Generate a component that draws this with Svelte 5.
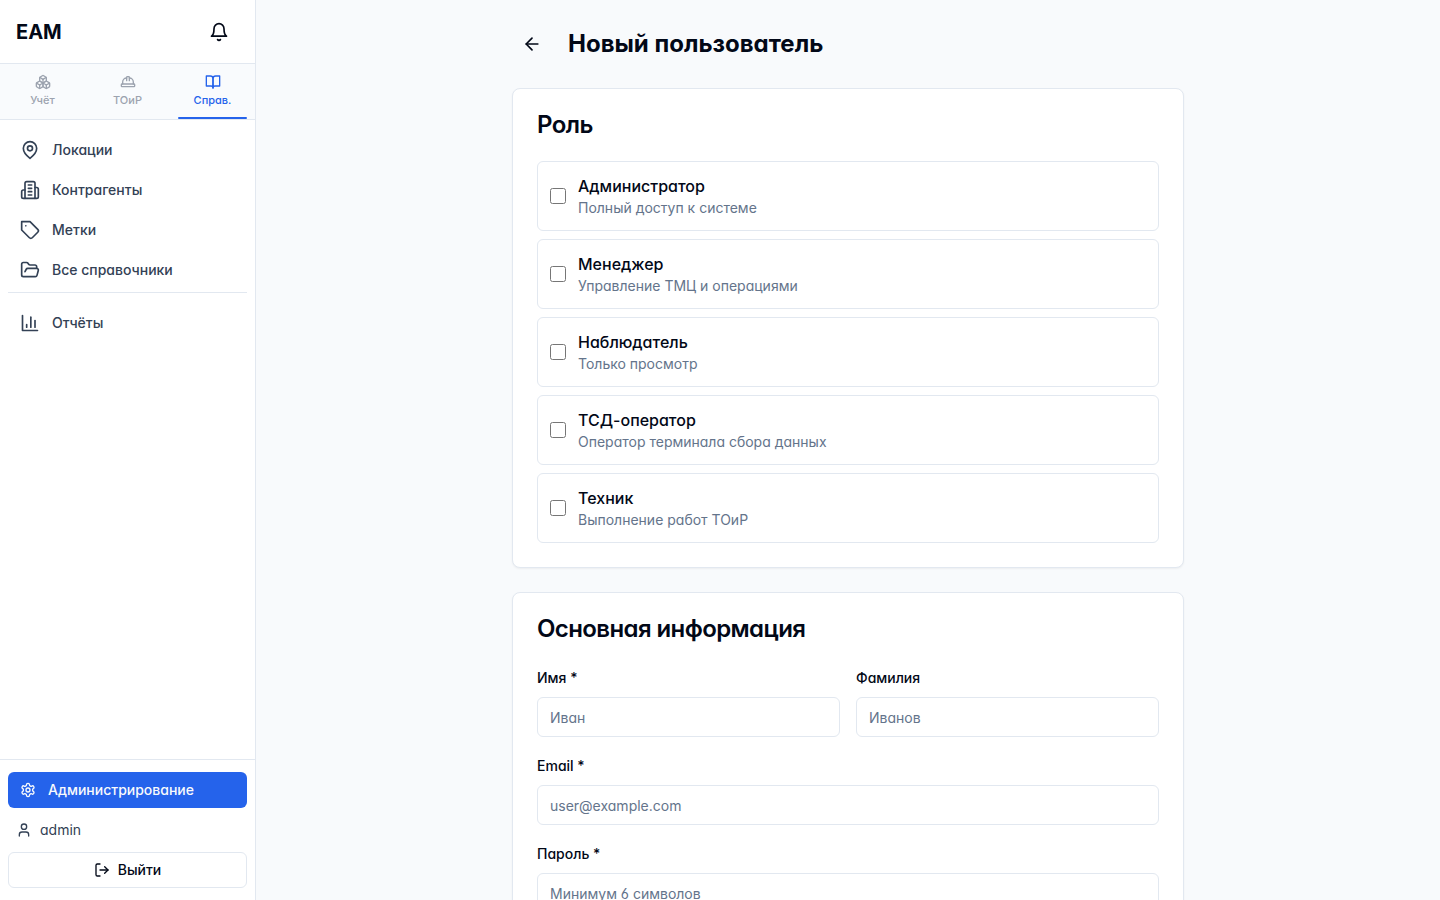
<script>
  const icons = {
    bell: [
      'M6 8a6 6 0 0 1 12 0c0 7 3 9 3 9H3s3-2 3-9',
      'M10.3 21a1.94 1.94 0 0 0 3.4 0',
    ],
    boxes: [
      'M2.97 12.92A2 2 0 0 0 2 14.63v3.24a2 2 0 0 0 .97 1.71l3 1.8a2 2 0 0 0 2.06 0L12 19v-5.5l-5-3-4.03 2.42Z',
      'm7 16.5-4.74-2.85',
      'm7 16.5 5-3',
      'M7 16.5v5.17',
      'M12 13.5V19l3.97 2.38a2 2 0 0 0 2.06 0l3-1.8a2 2 0 0 0 .97-1.71v-3.24a2 2 0 0 0-.97-1.71L17 10.5l-5 3Z',
      'm17 16.5-5-3',
      'm17 16.5 4.74-2.85',
      'M17 16.5v5.17',
      'M7.97 4.42A2 2 0 0 0 7 6.13v4.37l5 3 5-3V6.13a2 2 0 0 0-.97-1.71l-3-1.8a2 2 0 0 0-2.06 0l-3 1.8Z',
      'M12 8 7.26 5.15',
      'm12 8 4.74-2.85',
      'M12 13.5V8',
    ],
    hardHat: [
      'M2 18a1 1 0 0 0 1 1h18a1 1 0 0 0 1-1v-2a1 1 0 0 0-1-1H3a1 1 0 0 0-1 1v2z',
      'M10 10V5a1 1 0 0 1 1-1h2a1 1 0 0 1 1 1v5',
      'M4 15v-3a6 6 0 0 1 6-6',
      'M14 6a6 6 0 0 1 6 6v3',
    ],
    book: [
      'M2 3h6a4 4 0 0 1 4 4v14a3 3 0 0 0-3-3H2z',
      'M22 3h-6a4 4 0 0 0-4 4v14a3 3 0 0 1 3-3h7z',
    ],
    pin: [
      'M20 10c0 6-8 12-8 12s-8-6-8-12a8 8 0 0 1 16 0Z',
      'M15 10a3 3 0 1 1-6 0a3 3 0 1 1 6 0Z',
    ],
    building: [
      'M6 22V4a2 2 0 0 1 2-2h8a2 2 0 0 1 2 2v18Z',
      'M6 12H4a2 2 0 0 0-2 2v6a2 2 0 0 0 2 2h2',
      'M18 9h2a2 2 0 0 1 2 2v9a2 2 0 0 1-2 2h-2',
      'M10 6h4',
      'M10 10h4',
      'M10 14h4',
      'M10 18h4',
    ],
    tag: [
      'M12 2H2v10l9.29 9.29c.94.94 2.48.94 3.42 0l6.58-6.58c.94-.94.94-2.48 0-3.42L12 2Z',
      'M7 7h.01',
    ],
    folder: [
      'm6 14 1.5-2.9A2 2 0 0 1 9.24 10H20a2 2 0 0 1 1.94 2.5l-1.54 6a2 2 0 0 1-1.95 1.5H4a2 2 0 0 1-2-2V5a2 2 0 0 1 2-2h3.9a2 2 0 0 1 1.69.9l.81 1.2a2 2 0 0 0 1.67.9H18a2 2 0 0 1 2 2v2',
    ],
    chart: ['M3 3v18h18', 'M18 17V9', 'M13 17V5', 'M8 17v-3'],
    settings: [
      'M12.22 2h-.44a2 2 0 0 0-2 2v.18a2 2 0 0 1-1 1.73l-.43.25a2 2 0 0 1-2 0l-.15-.08a2 2 0 0 0-2.73.73l-.22.38a2 2 0 0 0 .73 2.73l.15.1a2 2 0 0 1 1 1.72v.51a2 2 0 0 1-1 1.74l-.15.09a2 2 0 0 0-.73 2.73l.22.38a2 2 0 0 0 2.73.73l.15-.08a2 2 0 0 1 2 0l.43.25a2 2 0 0 1 1 1.73V20a2 2 0 0 0 2 2h.44a2 2 0 0 0 2-2v-.18a2 2 0 0 1 1-1.73l.43-.25a2 2 0 0 1 2 0l.15.08a2 2 0 0 0 2.73-.73l.22-.39a2 2 0 0 0-.73-2.73l-.15-.08a2 2 0 0 1-1-1.74v-.5a2 2 0 0 1 1-1.74l.15-.09a2 2 0 0 0 .73-2.73l-.22-.38a2 2 0 0 0-2.73-.73l-.15.08a2 2 0 0 1-2 0l-.43-.25a2 2 0 0 1-1-1.73V4a2 2 0 0 0-2-2z',
      'M15 12a3 3 0 1 1-6 0a3 3 0 1 1 6 0Z',
    ],
    user: [
      'M19 21v-2a4 4 0 0 0-4-4H9a4 4 0 0 0-4 4v2',
      'M16 7a4 4 0 1 1-8 0a4 4 0 1 1 8 0Z',
    ],
    logout: [
      'M9 21H5a2 2 0 0 1-2-2V5a2 2 0 0 1 2-2h4',
      'm16 17 5-5-5-5',
      'M21 12H9',
    ],
    back: ['m12 19-7-7 7-7', 'M19 12H5'],
  };

  const tabs = [
    { id: 'assets', label: 'Учёт', icon: 'boxes' },
    { id: 'repair', label: 'ТОиР', icon: 'hardHat' },
    { id: 'refs', label: 'Справ.', icon: 'book' },
  ];

  const links = [
    { label: 'Локации', icon: 'pin' },
    { label: 'Контрагенты', icon: 'building' },
    { label: 'Метки', icon: 'tag' },
    { label: 'Все справочники', icon: 'folder' },
  ];

  const roles = [
    { id: 'admin', name: 'Администратор', hint: 'Полный доступ к системе' },
    { id: 'manager', name: 'Менеджер', hint: 'Управление ТМЦ и операциями' },
    { id: 'viewer', name: 'Наблюдатель', hint: 'Только просмотр' },
    { id: 'tsd', name: 'ТСД-оператор', hint: 'Оператор терминала сбора данных' },
    { id: 'tech', name: 'Техник', hint: 'Выполнение работ ТОиР' },
  ];

  let activeTab = $state('refs');
  let selected = $state([]);
  let form = $state({ firstName: '', lastName: '', email: '', password: '' });
</script>

{#snippet icon(name, size)}
  <svg
    width={size}
    height={size}
    viewBox="0 0 24 24"
    fill="none"
    stroke="currentColor"
    stroke-width="2"
    stroke-linecap="round"
    stroke-linejoin="round"
    aria-hidden="true"
  >
    {#each icons[name] as d}
      <path {d} />
    {/each}
  </svg>
{/snippet}

{#snippet field(key, label, type, placeholder)}
  <div class="field">
    <div class="label-row"><label for={key}>{label}</label></div>
    <input id={key} {type} {placeholder} bind:value={() => form[key], (v) => (form[key] = v)} />
  </div>
{/snippet}

<div class="layout">
  <aside>
    <header class="brand">
      <span class="logo">EAM</span>
      <button class="icon-btn" aria-label="Уведомления">{@render icon('bell', 20)}</button>
    </header>

    <div class="tabs">
      {#each tabs as tab (tab.id)}
        <button class="tab" class:active={activeTab === tab.id} onclick={() => (activeTab = tab.id)}>
          {@render icon(tab.icon, 16)}
          <span>{tab.label}</span>
        </button>
      {/each}
    </div>

    <nav>
      {#each links as link}
        <a class="link" href="#top">{@render icon(link.icon, 20)}{link.label}</a>
      {/each}
      <div class="nav-extra">
        <a class="link" href="#top">{@render icon('chart', 20)}Отчёты</a>
      </div>
    </nav>

    <div class="account">
      <a class="admin-link" href="#top">{@render icon('settings', 16)}Администрирование</a>
      <div class="user">{@render icon('user', 16)}admin</div>
      <button class="logout">{@render icon('logout', 16)}Выйти</button>
    </div>
  </aside>

  <main>
    <div class="container">
      <div class="page-head">
        <button class="icon-btn" aria-label="Назад">{@render icon('back', 20)}</button>
        <h1>Новый пользователь</h1>
      </div>

      <section class="card">
        <h2>Роль</h2>
        <div class="roles">
          {#each roles as role (role.id)}
            <label class="role">
              <input type="checkbox" value={role.id} bind:group={selected} />
              <div>
                <div class="role-name">{role.name}</div>
                <div class="role-hint">{role.hint}</div>
              </div>
            </label>
          {/each}
        </div>
      </section>

      <section class="card">
        <h2>Основная информация</h2>
        <div class="form">
          <div class="columns">
            {@render field('firstName', 'Имя *', 'text', 'Иван')}
            {@render field('lastName', 'Фамилия', 'text', 'Иванов')}
          </div>
          {@render field('email', 'Email *', 'email', 'user@example.com')}
          {@render field('password', 'Пароль *', 'password', 'Минимум 6 символов')}
        </div>
      </section>
    </div>
  </main>
</div>

<style>
  :global(body) {
    margin: 0;
    overflow: hidden;
  }
  .layout {
    --border: #e2e8f0;
    --fg: #020817;
    --muted: #64748b;
    --primary: #2563eb;
    display: flex;
    height: 100vh;
    background: #f8fafc;
    color: var(--fg);
    font-family: Inter, sans-serif;
    font-size: 16px;
    line-height: 24px;
    font-feature-settings: 'cv02', 'cv03', 'cv04', 'cv11';
  }
  .layout *, .layout {
    box-sizing: border-box;
  }
  svg {
    display: block;
    flex-shrink: 0;
  }
  button, input {
    font: inherit;
    font-feature-settings: inherit;
    letter-spacing: inherit;
    color: inherit;
  }
  button {
    padding: 0;
    border: none;
    background: transparent;
    cursor: pointer;
  }
  a {
    color: inherit;
    text-decoration: none;
  }

  aside {
    display: flex;
    flex-direction: column;
    width: 256px;
    flex-shrink: 0;
    background: #fff;
    border-right: 1px solid var(--border);
  }
  .brand {
    display: flex;
    align-items: center;
    justify-content: space-between;
    height: 64px;
    padding: 0 16px;
    border-bottom: 1px solid var(--border);
  }
  .logo {
    font-size: 20px;
    line-height: 28px;
    font-weight: 700;
  }
  .icon-btn {
    display: flex;
    align-items: center;
    justify-content: center;
    width: 40px;
    height: 40px;
    border-radius: 6px;
  }
  .tabs {
    display: flex;
    height: 56px;
    background: #f9fbfd;
    border-bottom: 1px solid var(--border);
  }
  .tab {
    position: relative;
    flex: 1;
    display: flex;
    flex-direction: column;
    align-items: center;
    justify-content: center;
    gap: 2px;
    font-size: 11px;
    line-height: 16.5px;
    font-weight: 500;
    color: #9ca3af;
  }
  .tab.active {
    color: var(--primary);
  }
  .tab.active::after {
    content: '';
    position: absolute;
    left: 8px;
    right: 8px;
    bottom: 0;
    height: 2px;
    border-radius: 2px;
    background: var(--primary);
  }
  nav {
    flex: 1;
    display: flex;
    flex-direction: column;
    gap: 4px;
    padding: 12px 8px;
  }
  .link {
    display: flex;
    align-items: center;
    gap: 12px;
    height: 36px;
    padding: 0 12px;
    border-radius: 6px;
    font-size: 14px;
    font-weight: 500;
    color: #334155;
  }
  .nav-extra {
    padding-top: 12px;
    border-top: 1px solid var(--border);
  }
  .account {
    display: flex;
    flex-direction: column;
    gap: 4px;
    padding: 12px 8px;
    border-top: 1px solid var(--border);
    font-size: 14px;
    line-height: 20px;
  }
  .admin-link {
    display: flex;
    align-items: center;
    gap: 12px;
    height: 36px;
    padding: 0 12px;
    border-radius: 6px;
    background: var(--primary);
    color: #f8fafc;
    font-weight: 500;
  }
  .user {
    display: flex;
    align-items: center;
    gap: 8px;
    height: 36px;
    padding: 0 8px;
    color: #334155;
  }
  .logout {
    display: flex;
    align-items: center;
    justify-content: center;
    gap: 8px;
    height: 36px;
    border: 1px solid var(--border);
    border-radius: 6px;
    background: #fff;
    font-weight: 500;
  }

  main {
    flex: 1;
    overflow: hidden;
    padding: 24px;
  }
  .container {
    display: flex;
    flex-direction: column;
    gap: 24px;
    max-width: 672px;
    margin: 0 auto;
  }
  .page-head {
    display: flex;
    align-items: center;
    gap: 16px;
  }
  h1, h2 {
    margin: 0;
    font-size: 24px;
  }
  h1 {
    line-height: 32px;
    font-weight: 700;
  }
  h2 {
    line-height: 24px;
    font-weight: 600;
    letter-spacing: -0.025em;
  }
  .card {
    display: flex;
    flex-direction: column;
    gap: 24px;
    padding: 24px;
    background: #fff;
    border: 1px solid var(--border);
    border-radius: 8px;
    box-shadow: 0 1px 2px rgba(0, 0, 0, 0.05);
  }
  .roles {
    display: flex;
    flex-direction: column;
    gap: 8px;
  }
  .role {
    display: flex;
    align-items: center;
    gap: 12px;
    padding: 12px;
    border: 1px solid var(--border);
    border-radius: 6px;
    cursor: pointer;
  }
  .role input {
    width: 16px;
    height: 16px;
    margin: 0;
  }
  .role-name {
    font-weight: 500;
  }
  .role-hint {
    font-size: 14px;
    line-height: 20px;
    color: var(--muted);
  }
  .form {
    display: flex;
    flex-direction: column;
    gap: 16px;
  }
  .columns {
    display: grid;
    grid-template-columns: 1fr 1fr;
    gap: 16px;
  }
  .field {
    display: flex;
    flex-direction: column;
    gap: 8px;
  }
  .field label {
    font-size: 14px;
    line-height: 14px;
    font-weight: 500;
  }
  .field input {
    width: 100%;
    height: 40px;
    padding: 8px 12px;
    border: 1px solid var(--border);
    border-radius: 6px;
    background: #fff;
    font-size: 14px;
    line-height: 20px;
  }
  .field input::placeholder {
    color: var(--muted);
    opacity: 1;
  }
</style>
